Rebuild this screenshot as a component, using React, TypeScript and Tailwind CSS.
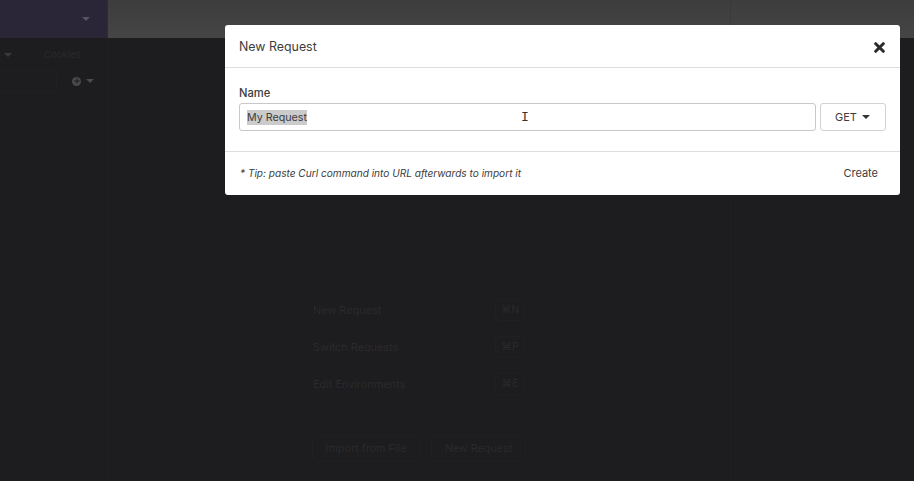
import { Plus } from 'lucide-react';

const shortcuts = [
  { label: 'New Request', keys: '⌘N' },
  { label: 'Switch Requests', keys: '⌘P' },
  { label: 'Edit Environments', keys: '⌘E' },
];

const Caret = ({ className }: { className: string }) => (
  <span className={`w-0 h-0 border-x-[4px] border-x-transparent border-t-[4px] ${className}`} />
);

const Workspace = () => {
  return (
    <div className="h-[481px] flex flex-col bg-[#1d1c1e] overflow-hidden">
      <header className="h-[38px] flex shrink-0">
        <div className="w-[108px] flex items-center justify-end pr-[17px] bg-[#2a2537] border-r border-[#2f2c38]">
          <Caret className="border-t-[#57535f]" />
        </div>
        <div className="w-[622px] bg-gradient-to-b from-[#3d3d3d] to-[#454545]" />
        <div className="flex-1 bg-gradient-to-b from-[#3d3d3d] to-[#454545] border-l border-[#3a3a3a]" />
      </header>
      <div className="flex-1 flex text-[#2b2a2c]">
        <aside className="w-[108px] border-r border-[#201f21] pt-[9px] shrink-0">
          <div className="h-[16px] flex items-center">
            <Caret className="ml-[4px] border-t-[#3a393b]" />
            <span className="ml-[32px] text-[9.6px]">Cookies</span>
          </div>
          <div className="flex items-center mt-[7px]">
            <div className="w-[57px] h-[22px] border border-l-0 border-[#211f21] rounded-r-sm" />
            <span className="ml-[15px] w-[9px] h-[9px] rounded-full bg-[#4a494b] flex items-center justify-center">
              <Plus size={8} strokeWidth={3} className="text-[#1d1c1e]" />
            </span>
            <Caret className="ml-[5px] border-t-[#4a494b]" />
          </div>
        </aside>
        <main className="w-[622px] flex flex-col items-center pt-[261px] shrink-0">
          <div className="w-[212px] flex flex-col gap-[15px]">
            {shortcuts.map((item) => (
              <div key={item.label} className="flex items-center justify-between h-[22px] text-[10.9px]">
                <span>{item.label}</span>
                <kbd className="w-[30px] h-[22px] flex items-center justify-center border border-[#211f21] rounded-sm font-['Inter',sans-serif] text-[10.5px]">{item.keys}</kbd>
              </div>
            ))}
          </div>
          <div className="w-[214px] flex justify-between mt-[41px] text-[10.8px]">
            <button className="w-[108px] h-[26px] border border-[#211f21] rounded-sm">Import from File</button>
            <button className="w-[95px] h-[26px] border border-[#211f21] rounded-sm">New Request</button>
          </div>
        </main>
        <div className="flex-1 border-l border-[#201f21]" />
      </div>
    </div>
  );
};

const NewRequestModal = () => {
  return (
    <div className="absolute left-[225px] top-[25px] w-[675px] h-[170px] bg-white rounded-[3px] flex flex-col text-[#3c3c3c]">
      <div className="h-[43px] shrink-0 flex items-center justify-between pl-[14px] pr-[15px] pt-[3px] border-b border-[#dddddd]">
        <h2 className="text-[12.4px] leading-none">New Request</h2>
        <svg width="11" height="11" viewBox="0 0 11 11" aria-label="Close">
          <path d="M1.7 1.7 L9.3 9.3 M9.3 1.7 L1.7 9.3" stroke="#2a2a2a" strokeWidth="3" strokeLinecap="round" />
        </svg>
      </div>
      <div className="h-[84px] shrink-0 px-[14px] pt-[18px] border-b border-[#dddddd]">
        <label className="block text-[11.2px] font-medium leading-[14px]">Name</label>
        <div className="flex gap-[4px] mt-[3px]">
          <div className="flex-1 h-[28px] border border-[#c8c8c8] rounded-[3px] flex items-center pl-[7px] text-[10.7px]">
            <span className="bg-[#cbcbcb] leading-[15px]">My Request</span>
            <span className="ml-[214px] text-[#333333] font-['Liberation_Mono',monospace] text-[13px] leading-none">I</span>
          </div>
          <button className="w-[66px] h-[28px] border border-[#d2d2d2] rounded-[3px] flex items-center justify-center gap-[5px] pr-[1px] text-[11px]">
            GET
            <Caret className="border-t-[#333333]" />
          </button>
        </div>
      </div>
      <div className="flex-1 flex items-center justify-between pl-[15px] pr-[22px]">
        <p className="text-[10.1px] italic">* Tip: paste Curl command into URL afterwards to import it</p>
        <button className="text-[11px]">Create</button>
      </div>
    </div>
  );
};

export default function App() {
  return (
    <div className="relative w-[914px] h-[481px] overflow-hidden font-['Inter',sans-serif]">
      <Workspace />
      <NewRequestModal />
    </div>
  );
}
